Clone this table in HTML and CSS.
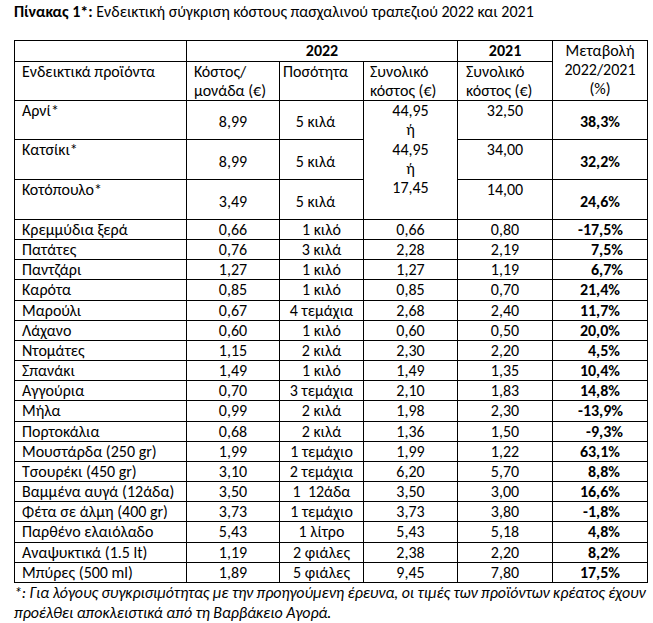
FILE: index.html
```html
<!DOCTYPE html>
<html lang="el">
<head>
<meta charset="utf-8">
<title>Πίνακας 1</title>
<link rel="stylesheet" href="styles.css">
</head>
<body>
<div class="page">
  <p class="title"><b>Πίνακας 1*:</b> Ενδεικτική σύγκριση κόστους πασχαλινού τραπεζιού 2022 και 2021</p>
  <table class="grid">
    <colgroup>
      <col class="c1"><col class="c2"><col class="c3"><col class="c4"><col class="c5"><col class="c6">
    </colgroup>
    <thead>
      <tr class="h1">
        <th></th>
        <th colspan="3" class="ctr">2022</th>
        <th class="ctr">2021</th>
        <th rowspan="2" class="ctr norm">Μεταβολή<br>2022/2021<br>(%)</th>
      </tr>
      <tr class="h2">
        <td class="name">Ενδεικτικά προϊόντα</td>
        <td class="hl7">Κόστος/<br>μονάδα (€)</td>
        <td class="hl3">Ποσότητα</td>
        <td class="hl6">Συνολικό<br>κόστος (€)</td>
        <td class="hl8">Συνολικό<br>κόστος (€)</td>
      </tr>
    </thead>
    <tbody>
      <tr class="meat first">
        <td class="name">Αρνί*</td>
        <td class="num mid">8,99</td>
        <td class="num mid qty">5 κιλά</td>
        <td class="num merged" rowspan="3">44,95<br>ή<br>44,95<br>ή<br>17,45</td>
        <td class="num">32,50</td>
        <td class="pct mid">38,3%</td>
      </tr>
      <tr class="meat">
        <td class="name">Κατσίκι*</td>
        <td class="num mid">8,99</td>
        <td class="num mid qty">5 κιλά</td>
        <td class="num">34,00</td>
        <td class="pct mid">32,2%</td>
      </tr>
      <tr class="meat">
        <td class="name">Κοτόπουλο*</td>
        <td class="num mid">3,49</td>
        <td class="num mid qty">5 κιλά</td>
        <td class="num">14,00</td>
        <td class="pct mid">24,6%</td>
      </tr>
      <tr><td class="name">Κρεμμύδια ξερά</td><td class="num">0,66</td><td class="num">1 κιλό</td><td class="num">0,66</td><td class="num">0,80</td><td class="pct wide">-17,5%</td></tr>
      <tr><td class="name">Πατάτες</td><td class="num">0,76</td><td class="num">3 κιλά</td><td class="num">2,28</td><td class="num">2,19</td><td class="pct wide">7,5%</td></tr>
      <tr><td class="name">Παντζάρι</td><td class="num">1,27</td><td class="num">1 κιλό</td><td class="num">1,27</td><td class="num">1,19</td><td class="pct wide">6,7%</td></tr>
      <tr><td class="name">Καρότα</td><td class="num">0,85</td><td class="num">1 κιλό</td><td class="num">0,85</td><td class="num">0,70</td><td class="pct">21,4%</td></tr>
      <tr><td class="name">Μαρούλι</td><td class="num">0,67</td><td class="num">4 τεμάχια</td><td class="num">2,68</td><td class="num">2,40</td><td class="pct">11,7%</td></tr>
      <tr><td class="name">Λάχανο</td><td class="num">0,60</td><td class="num">1 κιλό</td><td class="num">0,60</td><td class="num">0,50</td><td class="pct">20,0%</td></tr>
      <tr><td class="name">Ντομάτες</td><td class="num">1,15</td><td class="num">2 κιλά</td><td class="num">2,30</td><td class="num">2,20</td><td class="pct">4,5%</td></tr>
      <tr><td class="name">Σπανάκι</td><td class="num">1,49</td><td class="num">1 κιλό</td><td class="num">1,49</td><td class="num">1,35</td><td class="pct">10,4%</td></tr>
      <tr><td class="name">Αγγούρια</td><td class="num">0,70</td><td class="num">3 τεμάχια</td><td class="num">2,10</td><td class="num">1,83</td><td class="pct">14,8%</td></tr>
      <tr><td class="name">Μήλα</td><td class="num">0,99</td><td class="num">2 κιλά</td><td class="num">1,98</td><td class="num">2,30</td><td class="pct wide">-13,9%</td></tr>
      <tr><td class="name">Πορτοκάλια</td><td class="num">0,68</td><td class="num">2 κιλά</td><td class="num">1,36</td><td class="num">1,50</td><td class="pct wide">-9,3%</td></tr>
      <tr><td class="name">Μουστάρδα (250 gr)</td><td class="num">1,99</td><td class="num">1 τεμάχιο</td><td class="num">1,99</td><td class="num">1,22</td><td class="pct">63,1%</td></tr>
      <tr><td class="name">Τσουρέκι (450 gr)</td><td class="num">3,10</td><td class="num">2 τεμάχια</td><td class="num">6,20</td><td class="num">5,70</td><td class="pct">8,8%</td></tr>
      <tr><td class="name">Βαμμένα αυγά (12άδα)</td><td class="num">3,50</td><td class="num">1&nbsp; 12άδα</td><td class="num">3,50</td><td class="num">3,00</td><td class="pct">16,6%</td></tr>
      <tr><td class="name">Φέτα σε άλμη (400 gr)</td><td class="num">3,73</td><td class="num">1 τεμάχιο</td><td class="num">3,73</td><td class="num">3,80</td><td class="pct">-1,8%</td></tr>
      <tr><td class="name">Παρθένο ελαιόλαδο</td><td class="num">5,43</td><td class="num">1 λίτρο</td><td class="num">5,43</td><td class="num">5,18</td><td class="pct">4,8%</td></tr>
      <tr><td class="name">Αναψυκτικά (1.5 lt)</td><td class="num">1,19</td><td class="num">2 φιάλες</td><td class="num">2,38</td><td class="num">2,20</td><td class="pct">8,2%</td></tr>
      <tr><td class="name">Μπύρες (500 ml)</td><td class="num">1,89</td><td class="num">5 φιάλες</td><td class="num">9,45</td><td class="num">7,80</td><td class="pct">17,5%</td></tr>
    </tbody>
  </table>
  <p class="note">*: Για λόγους συγκρισιμότητας με την προηγούμενη έρευνα, οι τιμές των προϊόντων κρέατος έχουν<br>προέλθει αποκλειστικά από τη Βαρβάκειο Αγορά.</p>
</div>
</body>
</html>
```

FILE: styles.css
```css
html, body {
  margin: 0;
  padding: 0;
  background: #ffffff;
}

body {
  font-family: Carlito, "Open Sans", sans-serif;
  font-size: 16px;
  color: #000000;
}

.page {
  padding: 2px 0 0 14px;
}

.title {
  margin: 0;
  line-height: 20px;
}

.title b {
  font-weight: 700;
}

.grid {
  margin-top: 18px;
  border-collapse: collapse;
  table-layout: fixed;
  width: 633px;
}

.c1 { width: 172px; }
.c2 { width: 93px; }
.c3 { width: 84px; }
.c4 { width: 94px; }
.c5 { width: 95px; }
.c6 { width: 95px; }

.grid th,
.grid td {
  border: 1px solid #000000;
  padding: 0;
  line-height: 19px;
  height: 19.17px;
  vertical-align: top;
  text-align: left;
  font-weight: 400;
  white-space: nowrap;
}

.grid .h1 th {
  height: 20px;
  font-weight: 700;
}

.grid .h1 th.norm {
  font-weight: 400;
}

.grid .h2 td {
  height: 38px;
}

.grid .ctr {
  text-align: center;
}

.grid .name { padding-left: 7px; }
.grid .hl7 { padding-left: 7px; }
.grid .hl3 { padding-left: 3px; }
.grid .hl6 { padding-left: 6px; }
.grid .hl8 { padding-left: 8px; }

.grid .num {
  text-align: center;
}

.grid .pct {
  text-align: right;
  font-weight: 700;
  padding-right: 27px;
}

.grid .pct.wide {
  padding-right: 24px;
}

.grid .meat td {
  height: 39px;
}

.grid .meat.first td {
  height: 38px;
}

.grid .meat td.mid {
  vertical-align: middle;
  padding-top: 3px;
  height: 36px;
}

.grid .meat.first td.mid {
  height: 35px;
}

.grid .meat td.qty {
  padding-right: 12px;
}

.grid td.merged {
  line-height: 19.3px;
}

.note {
  margin: 0;
  font-style: italic;
  line-height: 20px;
  width: 639px;
  white-space: nowrap;
  letter-spacing: -0.12px;
}
```
